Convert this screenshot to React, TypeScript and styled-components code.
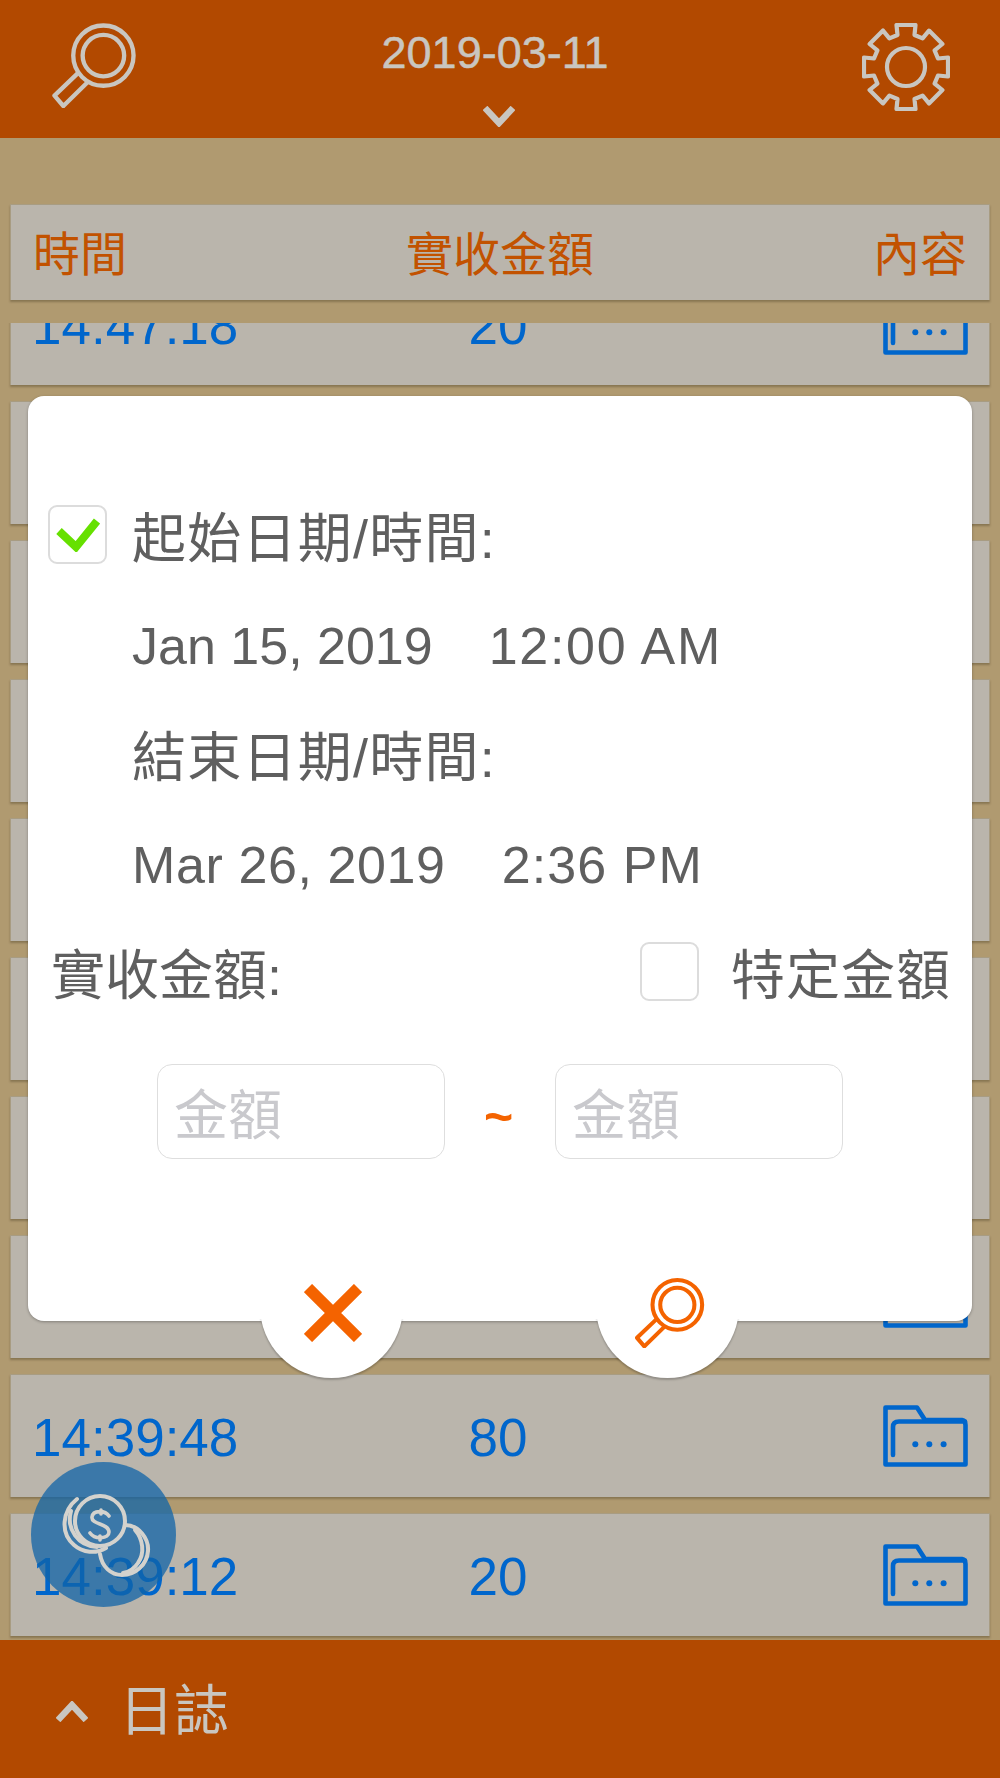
import React from "react";
import styled, { createGlobalStyle } from "styled-components";

const FONT = `"Liberation Sans", "Noto Sans CJK TC", sans-serif`;
const BAR = "#b24900";
const LIGHT = "#c9c6c0";
const BLUE = "#0066cc";
const ORANGE = "#f46300";

const Global = createGlobalStyle`
  html, body { margin: 0; padding: 0; background: #b09a70; }
  * { box-sizing: border-box; }
  body { font-family: ${FONT}; }
`;

const Page = styled.div`
  position: relative;
  width: 1000px;
  height: 1778px;
  display: flex;
  flex-direction: column;
  overflow: hidden;
  background: #b09a70;
`;

const TopBar = styled.header`
  height: 138px;
  flex: none;
  background: ${BAR};
  display: flex;
  align-items: flex-start;
  justify-content: space-between;
  padding: 23px 50px 0 52px;
`;

const DateBlock = styled.div`
  display: flex;
  flex-direction: column;
  align-items: center;
  color: ${LIGHT};
  font-size: 45px;
  line-height: 60px;
  gap: 23px;
`;

const DateText = styled.span`
  margin-right: 9px;
  -webkit-text-stroke: 0.5px ${LIGHT};
`;

const CardBase = styled.div`
  background: #bab5ac;
  border: 1px solid #a89c82;
  border-bottom: 0;
  box-shadow: 0 2px 2px rgba(80, 66, 40, 0.42);
`;

const TableHead = styled(CardBase)`
  flex: none;
  margin: 66px 10px 0;
  height: 96px;
  padding: 5px 22px 0;
  display: grid;
  grid-template-columns: 1fr auto 1fr;
  align-items: center;
  color: #c25200;
  font-size: 47px;
  line-height: 60px;
`;

const HeadEnd = styled.span`
  justify-self: end;
`;

const ListClip = styled.div`
  flex: 1;
  min-height: 0;
  margin-top: 23px;
  overflow: hidden;
`;

const List = styled.div`
  margin: -61px 10px 0;
  display: flex;
  flex-direction: column;
  gap: 16px;
`;

const Row = styled(CardBase)`
  flex: none;
  height: 123px;
  padding: 0 21px;
  display: grid;
  grid-template-columns: 1fr auto 1fr;
  align-items: center;
  color: ${BLUE};
  font-size: 53px;
  line-height: 60px;
`;

const TimeCell = styled.span`
  padding-top: 3px;
`;

const Amount = styled.span`
  padding-top: 3px;
  margin-right: 4px;
`;

const FolderSlot = styled.span`
  justify-self: end;
  display: flex;
`;

const BottomBar = styled.footer`
  height: 138px;
  flex: none;
  position: relative;
  background: ${BAR};
  display: flex;
  align-items: center;
  padding: 4px 0 0 56px;
  gap: 31px;
  color: ${LIGHT};
  font-size: 55px;
  line-height: 70px;
`;

const Dialog = styled.section`
  position: absolute;
  left: 28px;
  top: 396px;
  width: 944px;
  height: 925px;
  background: #fff;
  border-radius: 16px;
  box-shadow: 0 1px 3px rgba(0, 0, 0, 0.3);
  padding: 84px 22px 0 20px;
  color: #5f5f5f;
  font-size: 54px;
`;

const FormRow = styled.div`
  height: 109.5px;
  display: flex;
  align-items: center;
`;

const BetweenRow = styled(FormRow)`
  justify-content: space-between;
  padding: 0 0 3px 3px;
`;

const Box = styled.span`
  flex: none;
  width: 59px;
  height: 59px;
  border: 2px solid #dcdcdc;
  border-radius: 9px;
  background: #fff;
  display: flex;
  align-items: center;
  justify-content: center;
`;

const StartBox = styled(Box)`
  margin-right: 25px;
`;

const Label = styled.span`
  letter-spacing: 1.25px;
`;

const IndentLabel = styled(Label)`
  margin-left: 84px;
`;

const DateValue = styled.span<{ $track: number }>`
  margin-left: 84px;
  padding-top: 3px;
  font-size: 52px;
  letter-spacing: ${(p) => p.$track}px;
`;

const TimeValue = styled.span<{ $track: number }>`
  margin-left: 56px;
  letter-spacing: ${(p) => p.$track}px;
`;

const SpecificBox = styled.span`
  display: flex;
  align-items: center;
  gap: 32px;
`;

const SpecificLabel = styled.span`
  letter-spacing: 1px;
  margin-right: -1px;
`;

const RangeRow = styled.div`
  margin-top: 36px;
  padding-left: 109px;
  display: flex;
  align-items: center;
`;

const AmountInput = styled.div`
  width: 288px;
  height: 95px;
  border: 1.5px solid #dedede;
  border-radius: 15px;
  padding-left: 16px;
  display: flex;
  align-items: center;
  color: #c9c9cd;
  font-size: 54px;
`;

const Tilde = styled.span`
  width: 110px;
  text-align: center;
  color: ${ORANGE};
  font-size: 50px;
  font-weight: 700;
  line-height: 50px;
  padding: 12px 3px 0 0;
`;

const RoundAction = styled.button<{ $left: number }>`
  position: absolute;
  left: ${(p) => p.$left}px;
  top: 839px;
  width: 143px;
  height: 143px;
  padding: 0;
  border: 0;
  border-radius: 50%;
  background: #fff;
  box-shadow: 0 2px 2px rgba(0, 0, 0, 0.22);
  clip-path: inset(84px -6px -6px -6px);
`;

const ActionIcon = styled.span<{ $left: number; $top: number }>`
  position: absolute;
  left: ${(p) => p.$left}px;
  top: ${(p) => p.$top}px;
  display: flex;
`;

const Fab = styled.button`
  position: absolute;
  left: 31px;
  top: 1462px;
  width: 145px;
  height: 145px;
  padding: 0;
  border: 0;
  border-radius: 50%;
  background: rgba(16, 100, 168, 0.75);
  display: flex;
`;

const Glass = ({ size, color, width }: { size: number; color: string; width: number }) => (
  <svg width={size} height={size} viewBox="12 12 86 86" fill="none" stroke={color} strokeLinejoin="round" strokeWidth={width}>
    <circle cx="64" cy="45" r="30.5" />
    <circle cx="64" cy="45" r="21" />
    <path d="M38.5 62.5 L14.5 85.5 L23.5 96 L48 72" />
  </svg>
);

const gearPath = (() => {
  const cx = 55.7, cy = 55, ro = 42, rr = 32;
  const pts: string[] = [];
  for (let i = 0; i < 8; i++) {
    const a = (i * Math.PI) / 4 - Math.PI / 2;
    const local: [number, number][] = [
      [-8.5, rr], [-9.5, ro], [9.5, ro], [8.5, rr],
    ];
    local.forEach(([t, r]) => {
      const x = cx + r * Math.cos(a) - t * Math.sin(a);
      const y = cy + r * Math.sin(a) + t * Math.cos(a);
      pts.push(`${x.toFixed(1)} ${y.toFixed(1)}`);
    });
  }
  return "M" + pts.join(" L") + " Z";
})();

const Gear = () => (
  <svg width="88" height="88" viewBox="11.7 11 88 88" fill="none" stroke={LIGHT} strokeWidth="4.2" strokeLinejoin="round">
    <path d={gearPath} />
    <circle cx="55.7" cy="55" r="19" />
  </svg>
);

const Chevron = ({ up }: { up?: boolean }) => (
  <svg width="32" height="21" viewBox="0 0 32 21" fill="none" stroke={LIGHT} strokeWidth="6.5">
    <path d={up ? "M2 19 L16 4 L30 19" : "M2 2 L16 17 L30 2"} />
  </svg>
);

const Folder = () => (
  <svg width="85" height="62" viewBox="0 0 85 62" fill="none" stroke={BLUE} strokeWidth="4.6" strokeLinejoin="round" strokeLinecap="round">
    <path d="M2.5 2.5 H34 L42 15 H79 Q82.5 15.5 82.5 20 V59.5 H2.5 Z" />
    <path d="M10 50 V22 Q10 16.5 16 16.5 H82" />
    <circle cx="32.3" cy="39.3" r="3" fill={BLUE} stroke="none" />
    <circle cx="46.3" cy="39.3" r="3" fill={BLUE} stroke="none" />
    <circle cx="60.6" cy="39.3" r="3" fill={BLUE} stroke="none" />
  </svg>
);

const Check = () => (
  <svg width="44" height="34" viewBox="0 0 44 34" fill="none" stroke="#66e000" strokeWidth="8">
    <path d="M3 13 L20 29 L41 3" />
  </svg>
);

const Cross = () => (
  <svg width="58" height="58" viewBox="0 0 58 58" stroke={ORANGE} strokeWidth="11.5">
    <path d="M4 4 L54 54 M54 4 L4 54" />
  </svg>
);

const Coins = () => (
  <svg width="145" height="145" viewBox="6 7 145 145" fill="none" stroke="#d4d2cd" strokeLinecap="round">
    <g strokeWidth="4">
      <circle cx="75" cy="66" r="25" />
      <path d="M52 44 C37 56 35 78 49 90 C58 98 71 99 81 93" />
      <path d="M46 56 C41 74 53 91 72 92" />
      <path d="M100 70 C114 70 124 84 123 96 C122 110 110 120 97 120 C86 120 77 112 75 99" />
      <path d="M110 75 C118 84 120 98 113 108 C109 114 104 117 98 118" />
    </g>
    <path d="M84 61 C80 55 68 55 67 62 C66 70 84 68 84 77 C84 84 70 85 65 78 M76 55 V59 M75 81 V85" strokeWidth="3.6" />
  </svg>
);

const visibleRows = [
  { time: "14:47:18", amount: "20" },
  ...Array.from({ length: 7 }, () => ({ time: "", amount: "" })),
  { time: "14:39:48", amount: "80" },
  { time: "14:39:12", amount: "20" },
];

export default function App() {
  return (
    <Page>
      <Global />
      <TopBar>
        <Glass size={85} color={LIGHT} width={4.4} />
        <DateBlock>
          <DateText>2019-03-11</DateText>
          <Chevron />
        </DateBlock>
        <Gear />
      </TopBar>
      <TableHead>
        <span>時間</span>
        <span>實收金額</span>
        <HeadEnd>內容</HeadEnd>
      </TableHead>
      <ListClip>
        <List>
          {visibleRows.map((r, i) => (
            <Row key={i}>
              <TimeCell>{r.time}</TimeCell>
              <Amount>{r.amount}</Amount>
              <FolderSlot>
                <Folder />
              </FolderSlot>
            </Row>
          ))}
        </List>
      </ListClip>
      <BottomBar>
        <Chevron up />
        <span>日誌</span>
      </BottomBar>
      <Dialog>
        <FormRow>
          <StartBox>
            <Check />
          </StartBox>
          <Label>起始日期/時間:</Label>
        </FormRow>
        <FormRow>
          <DateValue $track={0}>
            Jan 15, 2019<TimeValue $track={1.7}>12:00 AM</TimeValue>
          </DateValue>
        </FormRow>
        <FormRow>
          <IndentLabel>結束日期/時間:</IndentLabel>
        </FormRow>
        <FormRow>
          <DateValue $track={0.6}>
            Mar 26, 2019<TimeValue $track={1.1}>2:36 PM</TimeValue>
          </DateValue>
        </FormRow>
        <BetweenRow>
          <span>實收金額:</span>
          <SpecificBox>
            <Box />
            <SpecificLabel>特定金額</SpecificLabel>
          </SpecificBox>
        </BetweenRow>
        <RangeRow>
          <AmountInput>金額</AmountInput>
          <Tilde>~</Tilde>
          <AmountInput>金額</AmountInput>
        </RangeRow>
        <RoundAction $left={232} aria-label="close" />
        <RoundAction $left={568} aria-label="search" />
        <ActionIcon $left={276} $top={888}>
          <Cross />
        </ActionIcon>
        <ActionIcon $left={607} $top={882}>
          <Glass size={70} color={ORANGE} width={5} />
        </ActionIcon>
      </Dialog>
      <Fab aria-label="coins">
        <Coins />
      </Fab>
    </Page>
  );
}
